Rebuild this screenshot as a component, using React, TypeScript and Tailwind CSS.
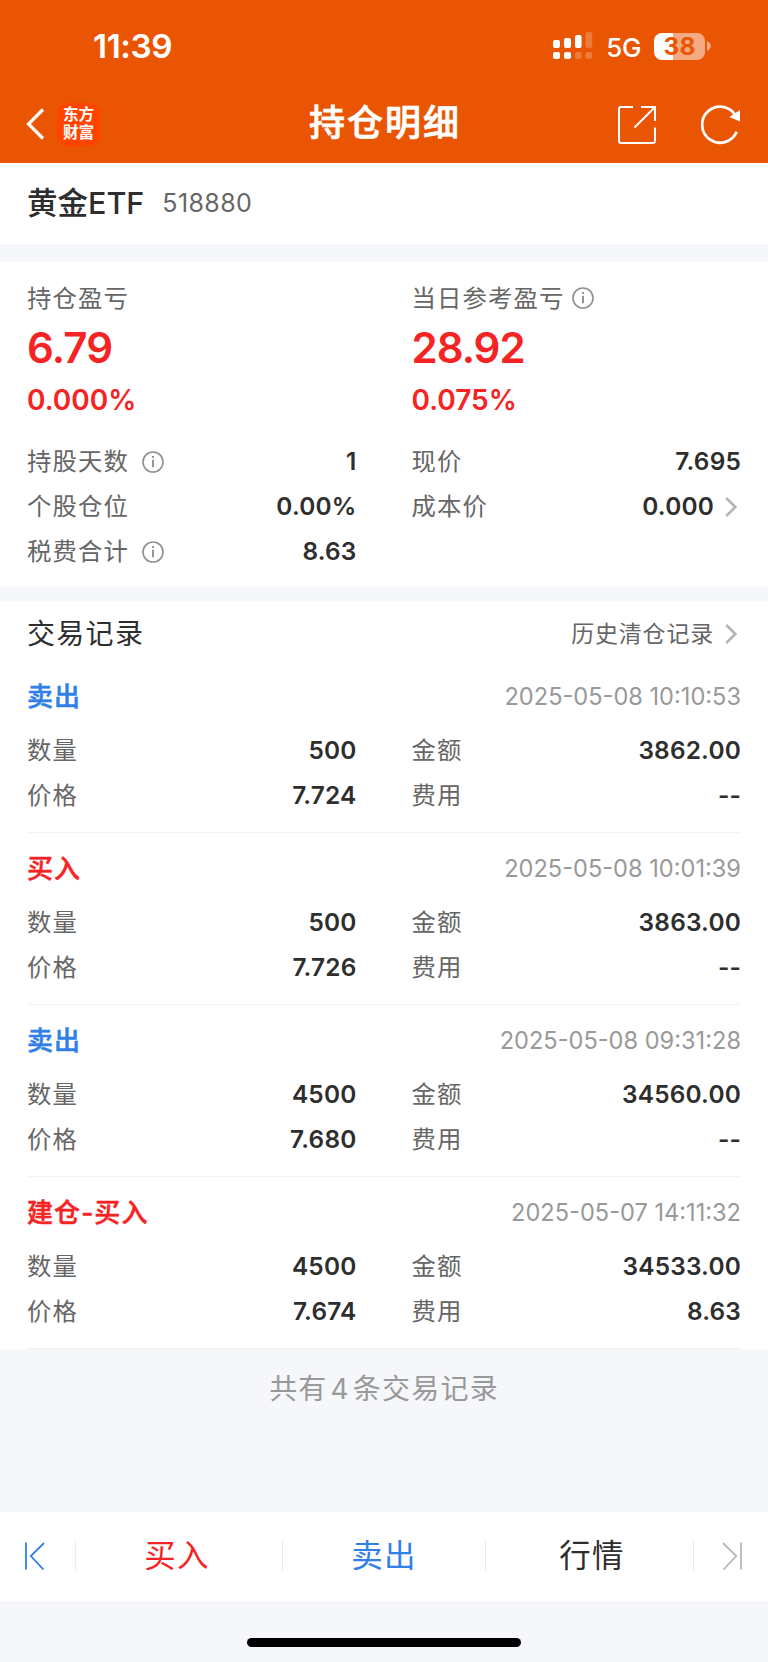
import React from "react";

const red = "text-[#f52323]";
const blue = "text-[#2f80e8]";

const records = [
  { type: "卖出", color: blue, time: "2025-05-08 10:10:53", count: "500", price: "7.724", amount: "3862.00", fee: "--" },
  { type: "买入", color: red, time: "2025-05-08 10:01:39", count: "500", price: "7.726", amount: "3863.00", fee: "--" },
  { type: "卖出", color: blue, time: "2025-05-08 09:31:28", count: "4500", price: "7.680", amount: "34560.00", fee: "--" },
  { type: "建仓-买入", color: red, time: "2025-05-07 14:11:32", count: "4500", price: "7.674", amount: "34533.00", fee: "8.63" },
];

const InfoIcon = ({ className = "" }: { className?: string }) => (
  <svg className={`shrink-0 ${className}`} width="22" height="22" viewBox="0 0 22 22" fill="none" stroke="#8f8f8f" strokeWidth="1.6">
    <circle cx="11" cy="11" r="10" />
    <path d="M11 8.8V16.2" strokeWidth="1.9" />
    <path d="M11 5V6.9" strokeWidth="2.1" />
  </svg>
);

const Chevron = () => (
  <svg className="ml-[11px] mr-1 shrink-0" width="12" height="20" viewBox="0 0 12 20" fill="none" stroke="#b3b3b3" strokeWidth="2.5">
    <path d="M1.2 1L10.4 10L1.2 19" />
  </svg>
);

type CellProps = {
  label: string;
  value: string;
  info?: boolean;
  more?: boolean;
};

const Cell = ({ label, value, info, more }: CellProps) => (
  <div className="flex h-[45px] items-center">
    <span className="text-[24.4px] tracking-[1.1px] text-[#666]">{label}</span>
    {info && <InfoIcon className="ml-[13px]" />}
    <span className="ml-auto text-[24.4px] font-semibold tracking-[0.2px] text-[#2e2e2e]">{value}</span>
    {more && <Chevron />}
  </div>
);

const Header = () => (
  <header className="h-[163px] bg-[#ea5504] text-white">
    <div className="flex h-[92px] items-center pl-[93px] pr-[57px]">
      <span className="pt-[2px] text-[33.3px] font-semibold tracking-[-0.4px]">11:39</span>
      <svg className="ml-auto" width="40" height="28" viewBox="0 0 40 28" fill="#fff">
        <rect x="0" y="8" width="7" height="8" rx="2" />
        <rect x="11" y="6" width="7" height="10" rx="2" />
        <rect x="22" y="3" width="6.6" height="13" rx="2" />
        <rect x="32.4" y="0" width="6.8" height="16" rx="2" opacity="0.22" />
        <rect x="0" y="20" width="7" height="7" rx="2" />
        <rect x="11" y="20" width="7" height="7" rx="2" />
        <rect x="22" y="20" width="6.6" height="7" rx="2" opacity="0.22" />
        <rect x="32.4" y="20" width="6.8" height="7" rx="2" opacity="0.22" />
      </svg>
      <span className="ml-[13px] pt-[2px] text-[26px] font-medium tracking-[-0.4px]">5G</span>
      <div className="ml-[13px] flex h-[27px] w-[51px] items-center justify-center rounded-[8px] bg-linear-to-r from-white from-38% to-white/50 to-38% text-[24.5px] font-bold leading-[26px] text-[#ea5504]">
        38
      </div>
      <svg className="ml-[2px]" width="4" height="10" viewBox="0 0 4 10" fill="#fff" opacity="0.5">
        <path d="M0 0C5 2 5 8 0 10Z" />
      </svg>
    </div>
    <div className="flex h-[64px] items-center pl-[25px] pr-[27px]">
      <div className="flex flex-1 items-center">
        <svg width="20" height="34" viewBox="0 0 20 34" fill="none" stroke="#fff" strokeWidth="3.2">
          <path d="M18 2.5L3.5 17L18 31.5" />
        </svg>
        <div className="ml-[12px] flex h-[43px] w-[43px] flex-col items-center justify-center rounded-[11px] bg-[#ff4400] text-[15.6px] font-bold leading-[18px]">
          <span>东方</span>
          <span>财富</span>
        </div>
      </div>
      <h1 className="pb-[3px] pl-[4px] text-[36px] font-medium tracking-[2px] [-webkit-text-stroke:0.7px_currentColor]">持仓明细</h1>
      <div className="flex flex-1 items-center justify-end pt-[2px]">
        <svg width="38" height="38" viewBox="0 0 38 38" fill="none" stroke="#fff" strokeWidth="2">
          <path d="M15 1H3Q1 1 1 3V35Q1 37 3 37H35Q37 37 37 35V21.5" />
          <path d="M23 1H37V15" />
          <path d="M16.5 21.5L36.5 1.5" />
        </svg>
        <svg className="ml-[45px]" width="40" height="40" viewBox="0 0 40 40" fill="none" stroke="#fff" strokeWidth="2.8">
          <path d="M35.7 26.8A18 18 0 1 1 34.8 10.8" />
          <path d="M39 5V16.4L28.3 12Z" fill="#fff" stroke="none" />
        </svg>
      </div>
    </div>
  </header>
);

const Summary = () => (
  <section className="h-[325px] bg-white px-[27px] pt-[14px]">
    <div className="grid grid-cols-2 gap-x-[55px]">
      <div>
        <div className="flex h-[44px] items-center text-[24.4px] tracking-[1.1px] text-[#666]">持仓盈亏</div>
        <div className={`flex h-[54px] items-center text-[42px] font-semibold tracking-[-0.9px] ${red}`}>6.79</div>
        <div className={`flex h-[52px] items-center text-[28px] font-semibold ${red}`}>0.000%</div>
      </div>
      <div>
        <div className="flex h-[44px] items-center text-[24.4px] tracking-[1.1px] text-[#666]">
          当日参考盈亏
          <InfoIcon className="ml-[8px]" />
        </div>
        <div className={`flex h-[54px] items-center text-[42px] font-semibold tracking-[-1px] ${red}`}>28.92</div>
        <div className={`flex h-[52px] items-center text-[28px] font-semibold ${red}`}>0.075%</div>
      </div>
    </div>
    <div className="mt-[13px] grid grid-cols-2 gap-x-[55px]">
      <Cell label="持股天数" value="1" info />
      <Cell label="现价" value="7.695" />
      <Cell label="个股仓位" value="0.00%" />
      <Cell label="成本价" value="0.000" more />
      <Cell label="税费合计" value="8.63" info />
    </div>
  </section>
);

const Records = () => (
  <section className="bg-white px-[27px]">
    <div className="flex h-[60px] items-center pt-[6px]">
      <h2 className="text-[28px] tracking-[1.3px] text-[#2e2e2e]">交易记录</h2>
      <span className="ml-auto text-[23px] tracking-[0.8px] text-[#666]">历史清仓记录</span>
      <Chevron />
    </div>
    {records.map((r) => (
      <div key={r.time} className="h-[172px] border-b border-[#f2f2f4] pt-[12px]">
        <div className="flex h-[48px] items-center justify-between">
          <span className={`pb-[2px] text-[26px] font-medium tracking-[1.1px] [-webkit-text-stroke:0.5px_currentColor] ${r.color}`}>{r.type}</span>
          <span className="text-[23.6px] text-[#999]">{r.time}</span>
        </div>
        <div className="mt-[7px] grid grid-cols-2 gap-x-[55px]">
          <Cell label="数量" value={r.count} />
          <Cell label="金额" value={r.amount} />
          <Cell label="价格" value={r.price} />
          <Cell label="费用" value={r.fee} />
        </div>
      </div>
    ))}
  </section>
);

const BottomBar = () => (
  <nav className="flex h-[89px] items-center bg-white pb-[2px] text-[31.5px] tracking-[1.2px]">
    <div className="flex w-[75px] justify-center pr-[5px]">
      <svg width="20" height="28" viewBox="0 0 20 28" fill="none" stroke="#2f80e8" strokeWidth="1.8">
        <path d="M1 0.5V27.5M19 1L5.8 14L18.5 27.5" />
      </svg>
    </div>
    <div className={`flex h-[31px] flex-1 items-center justify-center border-l border-[#ebebed] pr-[4px] ${red}`}>买入</div>
    <div className={`flex h-[31px] flex-1 items-center justify-center border-l border-[#ebebed] ${blue}`}>卖出</div>
    <div className="flex h-[31px] flex-1 items-center justify-center border-x border-[#ebebed] pl-[5px] text-[#2e2e2e]">行情</div>
    <div className="flex w-[74px] justify-center pl-[2px]">
      <svg width="20" height="28" viewBox="0 0 20 28" fill="none" stroke="#b8b8b8" strokeWidth="1.8">
        <path d="M19 0.5V27.5M1 1L14.2 14L1.5 27.5" />
      </svg>
    </div>
  </nav>
);

export default function App() {
  return (
    <div className="flex h-[1662px] w-[768px] flex-col overflow-hidden bg-[#f6f7fa] font-[Inter,'Noto_Sans_CJK_SC',sans-serif]">
      <Header />
      <section className="flex h-[81px] items-center bg-white px-[27px]">
        <h2 className="pb-[2px] text-[30.5px] font-medium text-[#2e2e2e]">黄金ETF</h2>
        <span className="ml-[18px] text-[25px] tracking-[0.4px] text-[#666]">518880</span>
      </section>
      <div className="h-[18px]" />
      <Summary />
      <div className="h-[14px]" />
      <Records />
      <div className="flex h-[79px] items-center justify-center pt-px text-[28px] tracking-[1.2px] text-[#999]">
        共有<span className="mx-[3px]">4</span>条交易记录
      </div>
      <div className="h-[84px]" />
      <BottomBar />
      <div className="mx-auto mt-[37px] h-[9px] w-[274px] rounded-full bg-black" />
    </div>
  );
}
